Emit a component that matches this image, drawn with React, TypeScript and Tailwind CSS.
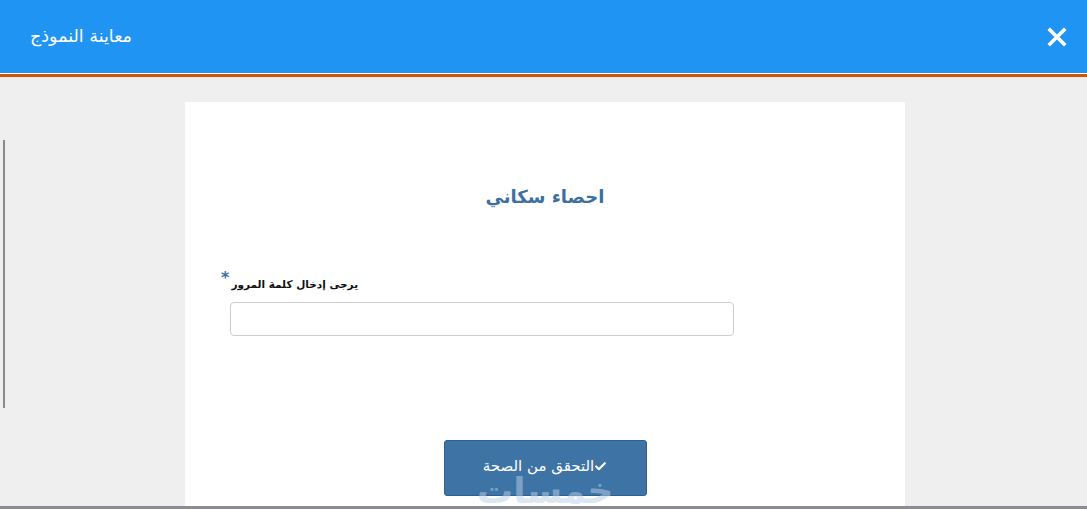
import { Check } from 'lucide-react';

function CloseIcon() {
  return (
    <svg width="20" height="20" viewBox="0 0 20 20" className="text-white">
      <path d="M3 3 L17 17 M17 3 L3 17" stroke="currentColor" strokeWidth="3.6" strokeLinecap="square" />
    </svg>
  );
}

export default function App() {
  return (
    <div className="flex h-[509px] w-[1087px] flex-col overflow-hidden bg-[#efefef] font-['DejaVu_Sans',sans-serif]">
      <header className="flex h-[73px] shrink-0 items-center justify-between bg-[#2094f2] pl-[30px] pr-[20px]">
        <h1 dir="rtl" className="text-[17.5px] font-normal text-white">معاينة النموذج</h1>
        <button className="flex h-[20px] w-[20px] items-center justify-center">
          <CloseIcon />
        </button>
      </header>
      <div className="h-px shrink-0 bg-white" />
      <div className="h-[3px] shrink-0 bg-[#d35400]" />

      <main className="relative flex flex-1 pl-[185px] pt-[25px]">
        <div className="absolute left-[3px] top-[63px] h-[268px] w-[2px] bg-[#8a8a8e]" />

        <div className="relative flex w-[720px] flex-col bg-white">
          <h2 dir="rtl" className="mt-[84px] text-center text-[18px] font-bold leading-[22px] text-[#3e6fa0]">
            احصاء سكاني
          </h2>

          <div className="mt-[63px] pl-[36px]">
            <label dir="rtl" className="inline-flex items-start text-[10.5px] font-bold leading-[20px] text-[#111]">
              <span className="mt-[3px]">يرجى إدخال كلمة المرور</span>
              <span className="mr-[2px] text-[16px] leading-[14px] text-[#3e6fa0]">*</span>
            </label>
          </div>

          <div className="mt-[7px] pl-[45px]">
            <input
              type="password"
              className="h-[34px] w-[504px] rounded-[4px] border border-[#cccccc] bg-white px-3 outline-none"
            />
          </div>

          <div className="mt-[104px] flex justify-center">
            <button
              dir="rtl"
              className="flex h-[56px] w-[203px] items-center justify-center rounded-[3px] border border-[#2e5f8f] bg-[#3e73a6] text-[15px] text-white"
            >
              <Check size={13} strokeWidth={4} className="mb-[3px]" />
              <span className="mb-[3px]">التحقق من الصحة</span>
            </button>
          </div>

          <div
            dir="rtl"
            className="pointer-events-none absolute left-[292px] top-[362px] text-[36px] font-bold text-[#b8d0e8] opacity-50"
          >
            خمسات
          </div>
        </div>
      </main>
      <div className="h-[3px] shrink-0 bg-[#8c8c91]" />
    </div>
  );
}
